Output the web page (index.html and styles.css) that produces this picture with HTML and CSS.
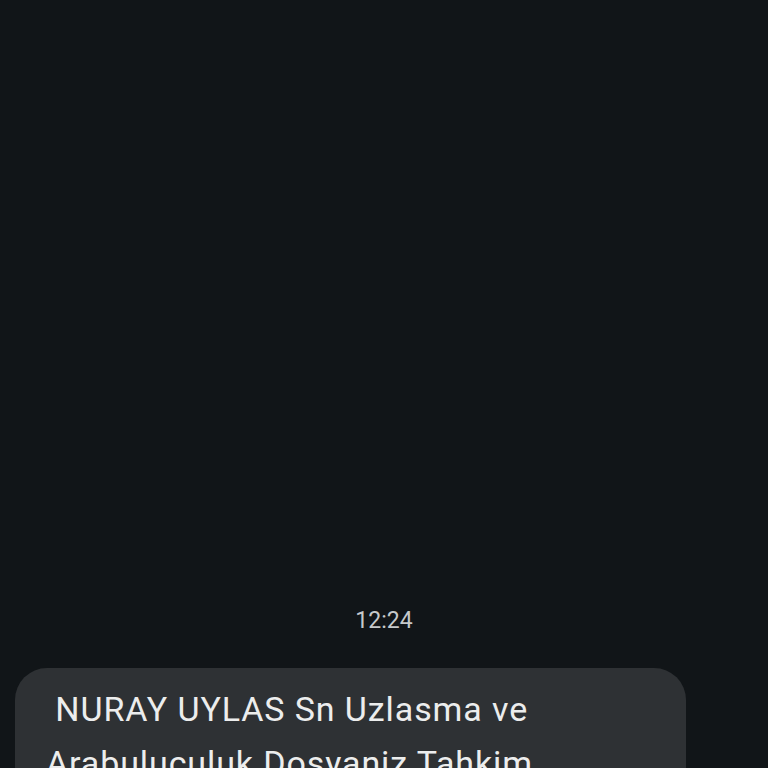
FILE: index.html
```html
<!DOCTYPE html>
<html>
<head>
<meta charset="utf-8">
<link rel="stylesheet" href="styles.css">
</head>
<body>
<div class="screen">
  <div class="time">12:24</div>
  <div class="bubble">
    <p class="msg">&nbsp;NURAY UYLAS Sn Uzlasma ve Arabuluculuk Dosyaniz Tahkim</p>
  </div>
</div>
</body>
</html>
```
FILE: styles.css
```css
html, body {
  margin: 0;
  padding: 0;
  background: #111518;
}
.screen {
  width: 768px;
  height: 768px;
  overflow: hidden;
  display: flex;
  flex-direction: column;
  padding-top: 606px;
  box-sizing: border-box;
  font-family: Roboto, "Noto Sans", sans-serif;
}
.time {
  text-align: center;
  color: #c6c9cb;
  font-size: 23px;
  line-height: 30px;
  height: 30px;
}
.bubble {
  margin-top: 32px;
  margin-left: 15px;
  width: 671px;
  background: #2e3134;
  border-radius: 32px;
  padding: 14px 30px 40px 31px;
  box-sizing: border-box;
  flex-shrink: 0;
}
.msg {
  margin: 0;
  color: #eceded;
  font-size: 34px;
  line-height: 54px;
  letter-spacing: 0.9px;
}
```
